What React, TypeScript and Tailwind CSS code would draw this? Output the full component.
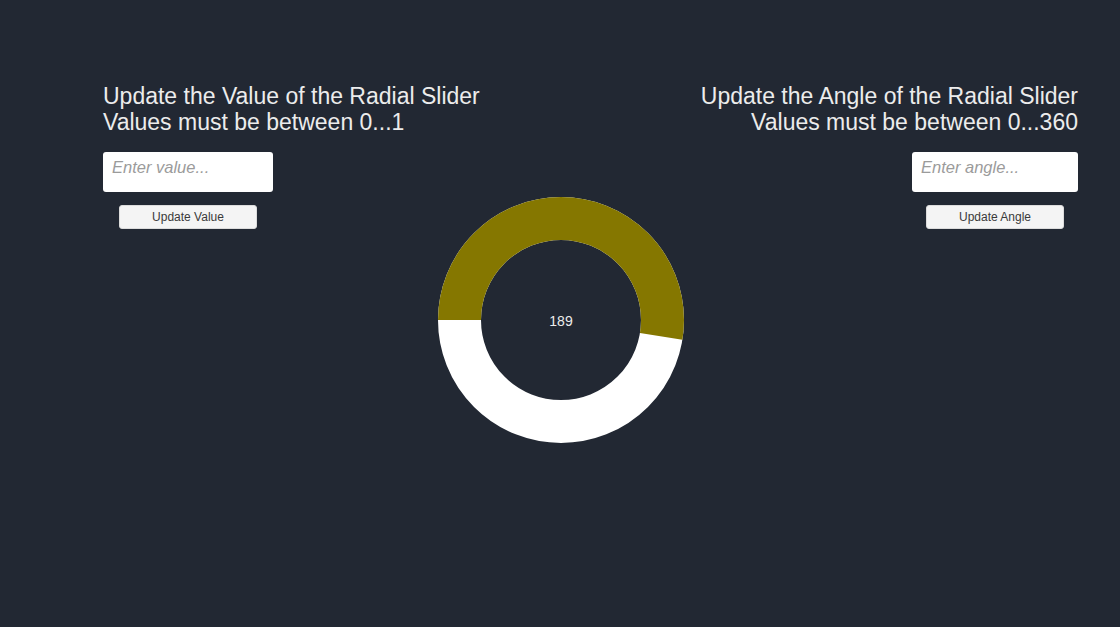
import React from "react";

const font = { fontFamily: '"Liberation Sans", Arial, sans-serif' };

function Donut({ angle }: { angle: number }) {
  const r = 101.5;
  const c = 2 * Math.PI * r;
  const arc = (angle / 360) * c;
  return (
    <div className="relative w-[246px] h-[246px] shrink-0">
      <svg width="246" height="246" viewBox="0 0 246 246">
        <circle cx="123" cy="123" r={r} fill="none" stroke="#ffffff" strokeWidth="43" />
        <circle
          cx="123"
          cy="123"
          r={r}
          fill="none"
          stroke="#857700"
          strokeWidth="43"
          strokeDasharray={`${arc} ${c}`}
          transform="rotate(180 123 123)"
        />
      </svg>
      <div className="absolute inset-0 flex items-center justify-center pt-[2px] text-[14px] text-[#ececec]">
        {angle}
      </div>
    </div>
  );
}

function Control({
  title,
  subtitle,
  placeholder,
  button,
  align,
  inputW,
}: {
  title: string;
  subtitle: string;
  placeholder: string;
  button: string;
  align: "left" | "right";
  inputW: string;
}) {
  const right = align === "right";
  return (
    <div className={`flex flex-col ${right ? "items-end" : "items-start"}`}>
      <div
        className={`text-[23px] leading-[26px] text-[#ececec] whitespace-nowrap ${right ? "text-right" : "text-left"}`}
      >
        <div>{title}</div>
        <div>{subtitle}</div>
      </div>
      <div className={`mt-[17px] flex flex-col items-center ${inputW}`}>
        <input
          placeholder={placeholder}
          className="w-full h-[40px] bg-white rounded-[3px] px-[9px] pt-[2px] pb-[12px] text-[16.5px] italic text-[#333] placeholder:text-[#9b9b9b] outline-none"
          style={font}
        />
        <button className="mt-[13px] w-[138px] h-[24px] bg-[#f4f4f4] rounded-[3px] text-[12px] text-[#3a3a3a] border border-[#dcdcdc]" style={font}>
          {button}
        </button>
      </div>
    </div>
  );
}

export default function App() {
  return (
    <div className="w-[1120px] h-[627px] bg-[#222833] overflow-hidden" style={font}>
      <div className="flex items-start pl-[103px] pt-[83px]">
        <div className="w-[335px] shrink-0">
          <Control
            title="Update the Value of the Radial Slider"
            subtitle="Values must be between 0...1"
            placeholder="Enter value..."
            button="Update Value"
            align="left"
            inputW="w-[170px]"
          />
        </div>
        <div className="mt-[114px]">
          <Donut angle={189} />
        </div>
        <div className="w-[394px] shrink-0 flex justify-end">
          <Control
            title="Update the Angle of the Radial Slider"
            subtitle="Values must be between 0...360"
            placeholder="Enter angle..."
            button="Update Angle"
            align="right"
            inputW="w-[166px]"
          />
        </div>
      </div>
    </div>
  );
}
